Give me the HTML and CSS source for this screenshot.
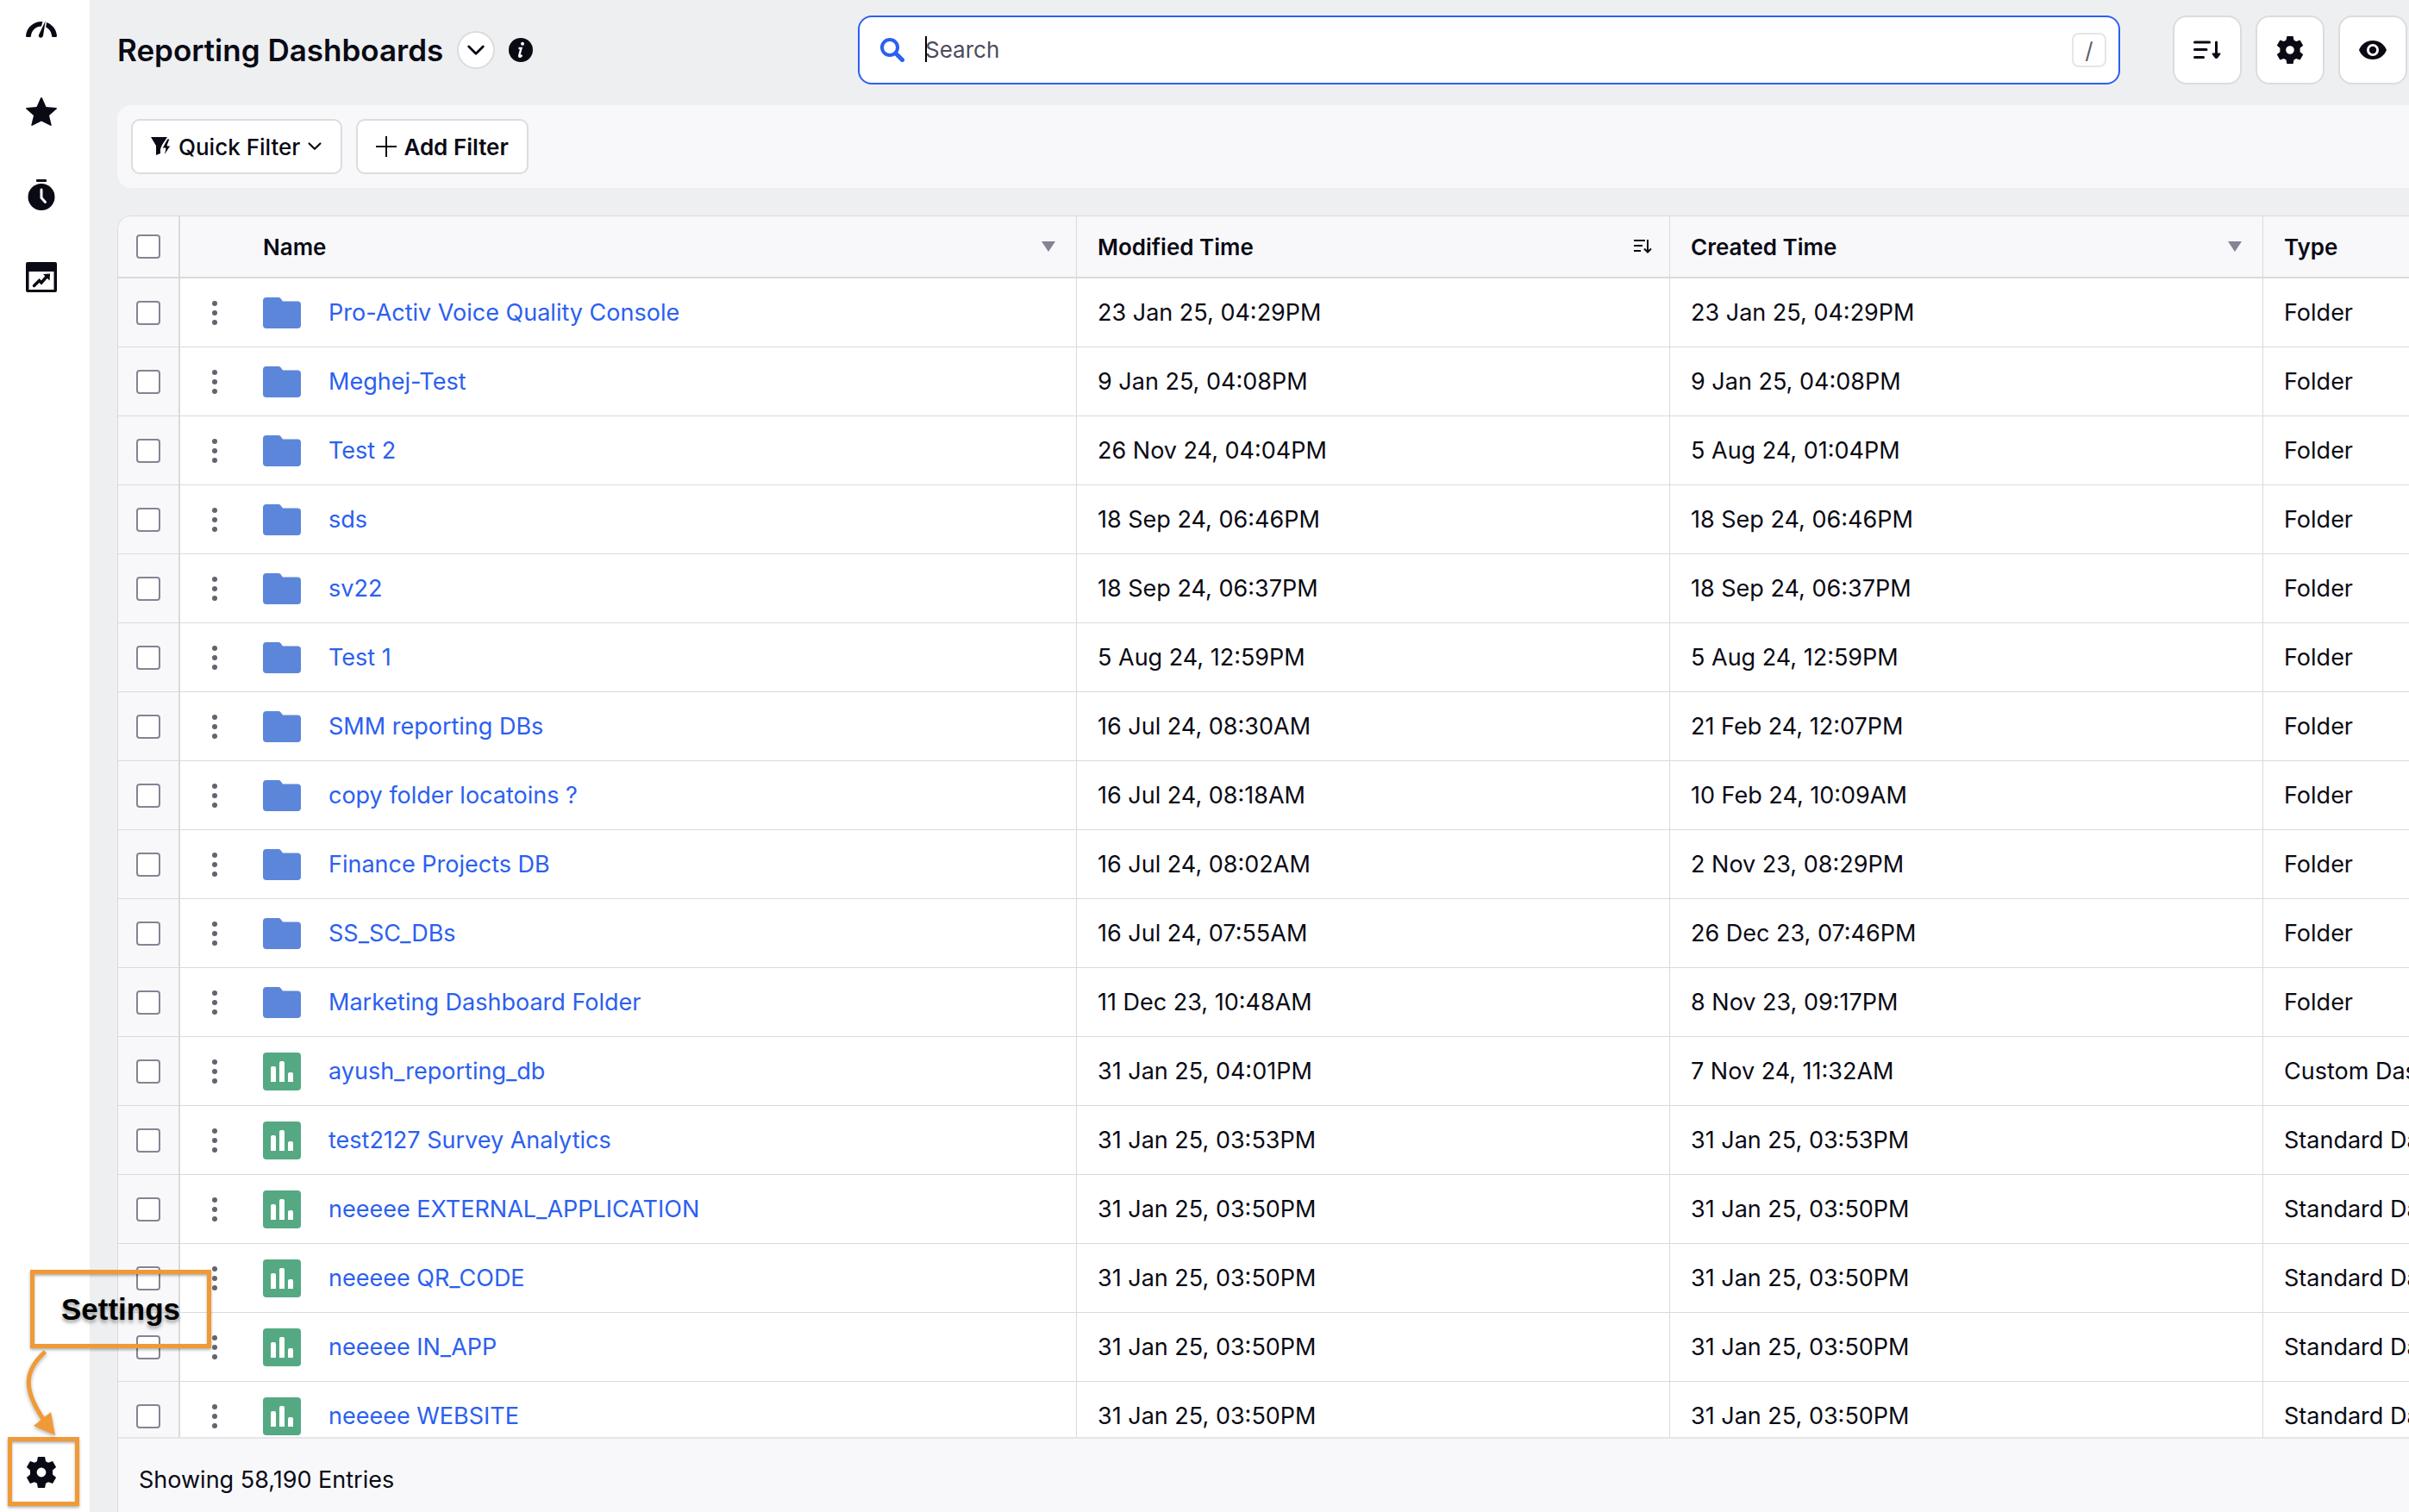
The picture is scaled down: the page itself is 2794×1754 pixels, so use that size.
FILE: index.html
```
<!DOCTYPE html>
<html lang="en">
<head>
  <meta charset="UTF-8" />
  <meta name="viewport" content="width=device-width, initial-scale=1.0" />
  <title>Reporting Dashboards</title>
  <link rel="stylesheet" href="styles.css">
</head>
<body>
  <!-- shared icons -->
  <svg class="sprite" aria-hidden="true">
    <symbol id="i-gear" viewBox="0 0 32 32"><path fill-rule="evenodd" d="M12.4 0h7.2l.9 4.600 2.600 1.500 4.500-1.600 3.600 6.200-3.600 3v4.600l3.600 3-3.600 6.200-4.500-1.600-2.600 1.500-.9 4.600h-7.200l-.9-4.600-2.600-1.500-4.500 1.600-3.600-6.200 3.600-3v-4.600l-3.600-3 3.600-6.200 4.500 1.600 2.600-1.500zM16 11.200a4.800 4.800 0 1 0 0 9.600 4.800 4.800 0 0 0 0-9.600z"/></symbol>
    <symbol id="i-sort" viewBox="0 0 32 22"><path fill="none" stroke="currentColor" stroke-width="3" stroke-linecap="round" d="M1.500 2h17M1.500 10.500h13.500M1.500 19.500h10M26.500 2v16"/><path d="M22.500 14.500h8q1.500 0 .8 1.400l-3 4.200q-1.800 1.800-3.600 0l-3-4.200q-.7-1.400.8-1.400z"/></symbol>
    <symbol id="i-sort-thin" viewBox="0 0 22 18"><path fill="none" stroke="currentColor" stroke-width="2" d="M1 2h13M1 8h10M1 14h8M17 1v14M13 11.500l4 4 4-4"/></symbol>
    <symbol id="i-down" viewBox="0 0 24 14"><path fill="none" stroke="currentColor" stroke-width="3" stroke-linecap="round" stroke-linejoin="round" d="M3 2l9 9 9-9"/></symbol>
    <symbol id="i-caret" viewBox="0 0 16 12"><path d="M0 0h16l-8 12z"/></symbol>
    <symbol id="i-more" viewBox="0 0 6 28"><circle cx="3" cy="3" r="3"/><circle cx="3" cy="14" r="3"/><circle cx="3" cy="25" r="3"/></symbol>
    <symbol id="i-folder" viewBox="0 0 44 36"><path d="M4 0h14q1.500 0 2.300 1l2.700 3.500h17q4 0 4 4V32q0 4-4 4H4q-4 0-4-4V4q0-4 4-4z"/></symbol>
    <symbol id="i-chart" viewBox="0 0 44 44"><rect width="44" height="44" rx="4"/><path fill="#fff" d="M9 18q0-2 2-2h2q2 0 2 2v16H9zM19 12q0-2 2-2h2q2 0 2 2v22h-6zM29 25q0-2 2-2h2q2 0 2 2v9h-6z"/></symbol>
  </svg>

  <div class="app">
    <nav class="sidebar">
      <a href="#" aria-label="Dashboards"><svg width="36" height="36" viewBox="0 0 36 36"><path d="M1.500 27Q0 27 0 25.500C1 15.500 9 8.500 19.500 9L18 14.500C12 14.500 6.500 19 6 25.500Q6 27 4.500 27zM24 10c7 2.500 11.500 8.500 12 15.500q0 1.500-1.500 1.500h-3q-1.500 0-1.500-1.500c-.4-4.500-3-8-6.800-9.900z"/><path d="M22.800 8L20 25.500q-.8 2.700-3.200 2.300-2.400-.6-1.800-3.300z"/></svg></a>
      <a href="#" aria-label="Favorites"><svg width="36" height="36" viewBox="0 0 36 36"><path d="M18 1q.7 0 1 .8L23.500 12l11.700 1q1.300.5.300 1.600L27 22l2.700 11q0 1.300-1.200.8L18 28.500 7.500 33.800q-1.200.5-1.200-.8L9 22 .5 14.600q-1-1.100.3-1.600l11.700-1L17 1.800q.3-.8 1-.8z"/></svg></a>
      <a href="#" aria-label="Recent"><svg width="36" height="36" viewBox="0 0 36 36"><rect x="12" width="12" height="3" rx="1"/><circle cx="18" cy="20.500" r="15.500"/><path d="M18 12v9.500l4.500 5" fill="none" stroke="#fff" stroke-width="3" stroke-linecap="round"/></svg></a>
      <a href="#" aria-label="Reports"><svg width="36" height="36" viewBox="0 0 36 36"><path fill-rule="evenodd" d="M2 0h32q2 0 2 2v31q0 2-2 2H2q-2 0-2-2V2q0-2 2-2zm1.500 11v21h29V11z"/><path d="M9.500 27.500l6-6 2.500 2.500 6.500-7.500" fill="none" stroke="currentColor" stroke-width="3.500" stroke-linecap="round"/><path d="M20 14l8-.5-.5 8z"/></svg></a>
      <a href="#" class="settings" aria-label="Settings"><svg width="36" height="36"><use href="#i-gear"/></svg></a>
    </nav>

    <main class="main">
      <header class="topbar">
        <div class="heading">
          <h1>Reporting Dashboards</h1>
          <button type="button" class="round" aria-label="Switch view"><svg width="22" height="13"><use href="#i-down"/></svg></button>
          <svg class="info" width="28" height="28" viewBox="0 0 28 28"><circle cx="14" cy="14" r="14"/><circle cx="16" cy="6.800" r="2" fill="#fff"/><path d="M11.500 12h3l-2.300 8.500q-.3 1.800 1.300 1.200l2-1.700" fill="none" stroke="#fff" stroke-width="2.400"/></svg>
        </div>
        <label class="search">
          <svg width="28" height="28" viewBox="0 0 28 28"><path d="M18 18l7.500 7.500" fill="none" stroke="currentColor" stroke-width="5" stroke-linecap="round"/><circle cx="11" cy="11" r="9" fill="none" stroke="currentColor" stroke-width="4"/></svg>
          <span class="field"><input type="text" placeholder="Search" aria-label="Search" /></span>
          <kbd>/</kbd>
        </label>
        <div class="actions">
          <button type="button" aria-label="Sort"><svg width="32" height="22"><use href="#i-sort"/></svg></button>
          <button type="button" aria-label="Configure"><svg width="32" height="32"><use href="#i-gear"/></svg></button>
          <button type="button" aria-label="Preview"><svg width="32" height="22" viewBox="0 0 32 22"><path fill-rule="evenodd" d="M16 0c7.500 0 13.500 4.500 16 11-2.500 6.500-8.500 11-16 11S2.500 17.500 0 11C2.500 4.500 8.500 0 16 0zm0 4a7 7 0 1 0 0 14 7 7 0 0 0 0-14z"/><circle cx="16" cy="11" r="4.200"/></svg></button>
        </div>
      </header>

      <div class="filters">
        <button type="button"><svg width="24" height="24" viewBox="0 0 24 24"><path d="M0 1h19l-6 9-2 5v5l-5 2V11z"/><path d="M19 3l-6 11h4l-2 9 8-12h-4l3-8z" stroke="#fff" stroke-width="1"/></svg>Quick Filter<svg width="18" height="10"><use href="#i-down"/></svg></button>
        <button type="button" class="add"><svg width="24" height="24" viewBox="0 0 24 24"><path d="M12 0v24M0 12h24" stroke="currentColor" stroke-width="2"/></svg>Add Filter</button>
      </div>

      <div class="grid">
        <div class="scroll">
          <table>
            <colgroup><col class="c-check"><col class="c-name"><col class="c-time"><col class="c-time"><col></colgroup>
            <thead>
              <tr>
                <th><input type="checkbox" aria-label="Select all" /></th>
                <th><div class="th name">Name<svg class="caret" width="16" height="12"><use href="#i-caret"/></svg></div></th>
                <th><div class="th sorted">Modified Time<svg width="22" height="18"><use href="#i-sort-thin"/></svg></div></th>
                <th><div class="th">Created Time<svg class="caret" width="16" height="12"><use href="#i-caret"/></svg></div></th>
                <th><div class="th">Type</div></th>
              </tr>
            </thead>
            <tbody id="rows"></tbody>
          </table>
        </div>
        <footer>Showing 58,190 Entries</footer>
      </div>
    </main>
  </div>

  <!-- settings callout -->
  <div class="callout">
    <div class="label">Settings</div>
    <svg class="arrow" width="60" height="103" viewBox="0 0 60 103"><path d="M23.500 4C-2.500 27 -1 49 21 82" fill="none" stroke="currentColor" stroke-width="5"/><path d="M10 90l20-16 5 27z"/></svg>
    <div class="frame"></div>
  </div>

  <script>
    const rows = [
      ['Pro-Activ Voice Quality Console', '23 Jan 25, 04:29PM', '23 Jan 25, 04:29PM', 'Folder'],
      ['Meghej-Test', '9 Jan 25, 04:08PM', '9 Jan 25, 04:08PM', 'Folder'],
      ['Test 2', '26 Nov 24, 04:04PM', '5 Aug 24, 01:04PM', 'Folder'],
      ['sds', '18 Sep 24, 06:46PM', '18 Sep 24, 06:46PM', 'Folder'],
      ['sv22', '18 Sep 24, 06:37PM', '18 Sep 24, 06:37PM', 'Folder'],
      ['Test 1', '5 Aug 24, 12:59PM', '5 Aug 24, 12:59PM', 'Folder'],
      ['SMM reporting DBs', '16 Jul 24, 08:30AM', '21 Feb 24, 12:07PM', 'Folder'],
      ['copy folder locatoins ?', '16 Jul 24, 08:18AM', '10 Feb 24, 10:09AM', 'Folder'],
      ['Finance Projects DB', '16 Jul 24, 08:02AM', '2 Nov 23, 08:29PM', 'Folder'],
      ['SS_SC_DBs', '16 Jul 24, 07:55AM', '26 Dec 23, 07:46PM', 'Folder'],
      ['Marketing Dashboard Folder', '11 Dec 23, 10:48AM', '8 Nov 23, 09:17PM', 'Folder'],
      ['ayush_reporting_db', '31 Jan 25, 04:01PM', '7 Nov 24, 11:32AM', 'Custom Dashboard'],
      ['test2127 Survey Analytics', '31 Jan 25, 03:53PM', '31 Jan 25, 03:53PM', 'Standard Dashboard'],
      ['neeeee EXTERNAL_APPLICATION', '31 Jan 25, 03:50PM', '31 Jan 25, 03:50PM', 'Standard Dashboard'],
      ['neeeee QR_CODE', '31 Jan 25, 03:50PM', '31 Jan 25, 03:50PM', 'Standard Dashboard'],
      ['neeeee IN_APP', '31 Jan 25, 03:50PM', '31 Jan 25, 03:50PM', 'Standard Dashboard'],
      ['neeeee WEBSITE', '31 Jan 25, 03:50PM', '31 Jan 25, 03:50PM', 'Standard Dashboard']
    ];

    document.getElementById('rows').innerHTML = rows.map(function ([name, modified, created, type]) {
      const icon = type === 'Folder'
        ? '<svg class="folder" width="44" height="36"><use href="#i-folder"/></svg>'
        : '<svg class="chart" width="44" height="44"><use href="#i-chart"/></svg>';
      return `<tr>
        <td><input type="checkbox" aria-label="Select ${name}" /></td>
        <td><div class="item"><button type="button" class="more" aria-label="More actions"><svg width="6" height="28"><use href="#i-more"/></svg></button>${icon}<a href="#">${name}</a></div></td>
        <td>${modified}</td>
        <td>${created}</td>
        <td>${type}</td>
      </tr>`;
    }).join('');

    document.querySelector('.search input').focus();
  </script>
</body>
</html>
```

FILE: styles.css
```
* {
  box-sizing: border-box;
}
body {
  margin: 0;
  font-family: Inter, "Liberation Sans", sans-serif;
  font-size: 26px;
  color: #0a0a14;
  background: #eeeff1;
  overflow: hidden;
}
svg {
  display: block;
  flex: none;
  fill: currentColor;
}
.sprite {
  position: absolute;
  width: 0;
  height: 0;
}
a {
  color: #2b60f0;
  text-decoration: none;
}
button {
  display: flex;
  align-items: center;
  justify-content: center;
  padding: 0;
  font: inherit;
  color: inherit;
  background: #fff;
  border: 2px solid #dcdcde;
  cursor: pointer;
}
.app {
  display: flex;
  height: 100vh;
}

/* sidebar */
.sidebar {
  flex: none;
  width: 104px;
  padding: 16px 0 28px 30px;
  display: flex;
  flex-direction: column;
  gap: 60px;
  background: #fff;
}
.sidebar a {
  color: #0a0a14;
}
.sidebar .settings {
  margin-top: auto;
}

/* header */
.main {
  flex: 1;
  min-width: 0;
  padding: 18px 0 0 32px;
  display: flex;
  flex-direction: column;
  gap: 24px;
}
.topbar {
  display: grid;
  grid-template-columns: minmax(0, 859px) 1fr auto;
  align-items: center;
  padding-right: 2px;
}
.heading {
  display: flex;
  align-items: center;
  gap: 16px;
}
h1 {
  margin: 0;
  font-size: 35px;
  line-height: 48px;
  font-weight: 600;
}
.round {
  width: 44px;
  height: 44px;
  border-radius: 50%;
}
.search {
  display: flex;
  align-items: center;
  height: 80px;
  padding: 0 14px 0 24px;
  background: #fff;
  border: 2px solid #2b60f0;
  border-radius: 16px;
  color: #2b60f0;
}
.field {
  position: relative;
  flex: 1;
  min-width: 0;
  margin-left: 24px;
}
/* text cursor */
.field::before {
  content: "";
  position: absolute;
  left: 0;
  top: 4px;
  width: 2px;
  height: 30px;
  background: #000;
}
.search input {
  display: block;
  width: 100%;
  height: 40px;
  padding: 0 0 2px;
  border: 0;
  outline: 0;
  background: none;
  font: inherit;
  color: #0a0a14;
  caret-color: transparent;
}
.search input::placeholder {
  color: #4c4c5a;
}
.search kbd {
  width: 40px;
  height: 40px;
  border: 2px solid #e6e6e8;
  border-radius: 8px;
  font: inherit;
  line-height: 38px;
  text-align: center;
  color: #5e5e6c;
}
.actions {
  display: flex;
  gap: 16px;
  margin-left: 61px;
}
.actions button {
  width: 80px;
  height: 80px;
  border-radius: 16px;
}

/* filters */
.filters {
  display: flex;
  gap: 16px;
  padding: 16px;
  background: #f8f8fb;
  border-radius: 16px 0 0 16px;
}
.filters button {
  height: 64px;
  padding: 0 21px;
  gap: 8px;
  border-radius: 10px;
  font-weight: 500;
}
.filters .add {
  font-weight: 600;
}

/* table */
.grid {
  flex: 1;
  min-height: 0;
  margin-top: 8px;
  display: flex;
  flex-direction: column;
  background: #f8f8fb;
  border: 1px solid #dadadc;
  border-width: 1px 0 0 1px;
  border-radius: 16px 0 0 0;
  overflow: hidden;
}
.scroll {
  flex: 1;
  min-height: 0;
  overflow: hidden;
}
table {
  width: 100%;
  table-layout: fixed;
  border-collapse: separate;
  border-spacing: 0;
}
.c-check {
  width: 72px;
}
.c-name {
  width: 1040px;
}
.c-time {
  width: 688px;
}
th, td {
  padding: 0 24px;
  border: 0 solid #dadadc;
  border-width: 0 1px 1px 0;
  text-align: left;
  white-space: nowrap;
}
th {
  height: 72px;
  border-bottom-width: 2px;
  font-weight: 600;
}
td {
  height: 80px;
  font-size: 27px;
  background: #fff;
}
th:first-child, td:first-child {
  padding: 0 0 0 21px;
  border-right-width: 2px;
  background: #f8f8fb;
}
th:last-child, td:last-child {
  border-right: 0;
}
.th {
  display: flex;
  align-items: center;
  justify-content: space-between;
}
.th.name {
  padding-left: 72px;
}
.th.sorted {
  margin-right: -4px;
}
.caret {
  color: #858494;
}
input[type="checkbox"] {
  display: block;
  appearance: none;
  width: 28px;
  height: 28px;
  margin: 0;
  background: #fff;
  border: 2px solid #858494;
  border-radius: 4px;
}
.item {
  display: flex;
  align-items: center;
}
.more {
  width: 32px;
  height: 44px;
  margin-right: 40px;
  background: none;
  border: 0;
  color: #64636f;
}
.folder {
  color: #5c86da;
}
.chart {
  color: #54a983;
}
.item a {
  margin-left: 32px;
}
footer {
  height: 87px;
  padding-left: 24px;
  border-top: 2px solid #e6e6e8;
  font-size: 27px;
  line-height: 96px;
}

/* callout over the page */
.callout {
  position: absolute;
  left: 9px;
  bottom: 7px;
  color: #f09a37;
}
.label {
  width: 210px;
  height: 91px;
  margin-left: 26px;
  border: 5px solid #f09a37;
  box-shadow: 0 2px 3px rgba(0, 0, 0, .3), inset 0 2px 3px rgba(0, 0, 0, .3);
  font-family: "Liberation Sans", Arial, sans-serif;
  font-size: 35px;
  font-weight: 700;
  line-height: 82px;
  text-align: center;
  color: #000;
  text-shadow: 0 3px 4px rgba(0, 0, 0, .4);
}
.arrow {
  margin-left: 20px;
  filter: drop-shadow(0 2px 2px rgba(0, 0, 0, .3));
}
.frame {
  width: 83px;
  height: 80px;
  border: 5px solid #f09a37;
  box-shadow: 0 2px 3px rgba(0, 0, 0, .3), inset 0 2px 3px rgba(0, 0, 0, .3);
}
```
